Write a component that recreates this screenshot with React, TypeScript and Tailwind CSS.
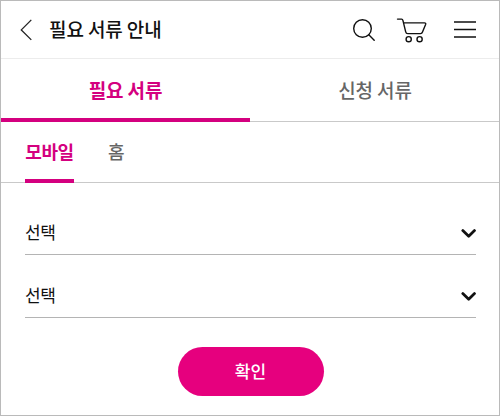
const ChevronDown = () => (
  <svg className="mt-[3px] h-[10px] w-4" viewBox="0 0 16 10" fill="none" stroke="#111" strokeWidth="2.8" strokeLinecap="round" strokeLinejoin="round">
    <path d="M2.8 1.6l5.9 5.6L14.5 1.6" />
  </svg>
);

const Select = ({ label }: { label: string }) => (
  <button className="flex h-[63px] w-full items-center justify-between border-b border-[#b4b4b4] pt-[19px] text-left text-[17px] tracking-[-0.3px] text-[#111]">
    <span className="pb-[3px]">{label}</span>
    <ChevronDown />
  </button>
);

export default function App() {
  return (
    <div className="flex h-[416px] w-[500px] flex-col border border-[#bababa] bg-white font-['Noto_Sans_CJK_KR',sans-serif] leading-none">
      <header className="flex h-[58px] shrink-0 items-center border-b border-[#ececec] pr-[23px] pl-[19px]">
        <svg className="h-[22px] w-3" viewBox="0 0 12 22" fill="none" stroke="#222" strokeWidth="1.3">
          <path d="M11.3 .9L1.3 10.9L11.3 20.9" />
        </svg>
        <h1 className="ml-[17px] pb-[3px] text-[19px] font-medium tracking-[-0.1px] text-[#111]">필요 서류 안내</h1>
        <div className="ml-auto flex items-center">
          <svg className="h-[22px] w-[22px]" viewBox="0 0 22 22" fill="none" stroke="#111" strokeWidth="1.4" strokeLinecap="round">
            <circle cx="9.5" cy="9.5" r="8.8" />
            <path d="M15.8 15.8L21.2 21.2" />
          </svg>
          <svg className="ml-[21px] h-[26px] w-[31px]" viewBox="0 0 31 26" fill="none" stroke="#111" strokeWidth="1.4" strokeLinecap="round" strokeLinejoin="round">
            <path d="M1.5 2.1H5.6Q6.6 2.1 6.9 3.3L9.7 14.8Q10.1 16.6 11.8 16.6H24.6Q26 16.6 26.5 15L29.6 7.6Q30.2 5.9 28.5 5.9H7.6" />
            <circle cx="12.7" cy="22.2" r="2.6" />
            <circle cx="23.6" cy="22.2" r="2.6" />
          </svg>
          <svg className="ml-[27px] h-[18px] w-[22px]" viewBox="0 0 22 18" stroke="#111" strokeWidth="1.4">
            <path d="M0 1H22M0 8.5H22M0 16H22" />
          </svg>
        </div>
      </header>

      <nav className="flex h-[63px] shrink-0 border-b border-[#c9c9c9] text-[19px] tracking-[-0.1px]">
        <button className="h-[63px] w-[249px] border-b-4 border-[#d4007f] pt-px font-bold text-[#d4007f]">필요 서류</button>
        <button className="h-[61px] flex-1 pl-px font-medium text-[#666]">신청 서류</button>
      </nav>

      <nav className="flex h-[61px] shrink-0 gap-[34px] border-b border-[#c9c9c9] pl-6 text-[18px]">
        <button className="h-[61px] w-[49px] border-b-4 border-[#d4007f] pt-px font-bold whitespace-nowrap tracking-[-0.4px] text-[#d4007f]">모바일</button>
        <button className="h-[58px] font-medium text-[#666]">홈</button>
      </nav>

      <main className="flex flex-col items-center px-[23px] pt-[9px] pl-6">
        <Select label="선택" />
        <Select label="선택" />
        <button className="mt-[29px] h-[49px] w-[146px] rounded-full bg-[#e6007e] pb-[3px] text-[17px] font-medium text-white">확인</button>
      </main>
    </div>
  );
}
